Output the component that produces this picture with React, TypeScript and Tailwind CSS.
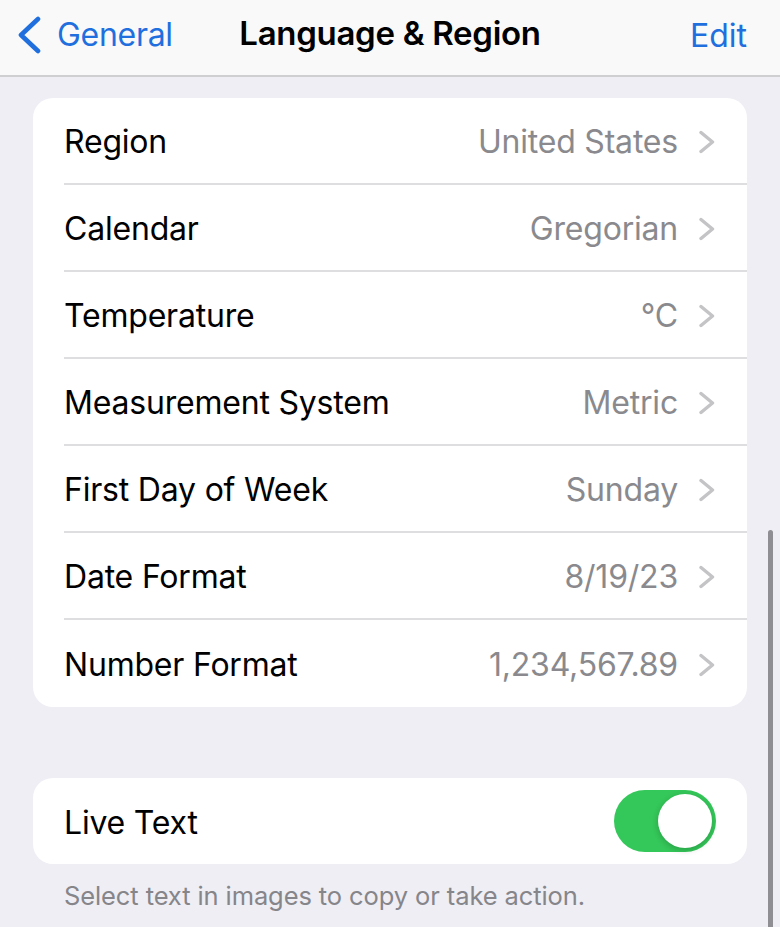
// Rows of the "Language & Region" settings group
const ROWS: { label: string; value: string }[] = [
  { label: "Region", value: "United States" },
  { label: "Calendar", value: "Gregorian" },
  { label: "Temperature", value: "°C" },
  { label: "Measurement System", value: "Metric" },
  { label: "First Day of Week", value: "Sunday" },
  { label: "Date Format", value: "8/19/23" },
  { label: "Number Format", value: "1,234,567.89" },
];

function Chevron() {
  return (
    <svg width="17" height="24" viewBox="0 0 17 24" className="ml-[21px] shrink-0">
      <polyline
        points="2,2.5 13.5,12 2,21.5"
        fill="none"
        stroke="#c4c4c7"
        strokeWidth="3.4"
        strokeLinecap="round"
        strokeLinejoin="round"
      />
    </svg>
  );
}

function Row({ label, value, last }: { label: string; value: string; last: boolean }) {
  return (
    <div className="flex h-[87px] pl-[31px]">
      <div
        className={`flex flex-1 items-center pr-[31px] pt-[3px] ${last ? "" : "border-b-2 border-[#dedee0]"}`}
      >
        <span className="flex-1 text-[32px] tracking-[-0.2px] text-black">{label}</span>
        <span className="text-[32px] tracking-[-0.2px] text-[#8a8a8e]">{value}</span>
        <Chevron />
      </div>
    </div>
  );
}

export default function App() {
  return (
    <div
      className="relative h-[927px] w-[780px] overflow-hidden bg-[#efeef4]"
      style={{ fontFamily: "Inter, 'Noto Sans', sans-serif" }}
    >
      {/* Nav bar */}
      <div className="grid h-[77px] grid-cols-[1fr_auto_1fr] items-start border-b-2 border-[#cfcfd2] bg-[#f9f9f9] px-[17px] pt-[11px]">
        <div className="flex items-center text-[#1f6fdf]">
          <svg width="26" height="38" viewBox="0 0 26 38" className="shrink-0">
            <polyline
              points="21,3 4,19 21,35"
              fill="none"
              stroke="#1f6fdf"
              strokeWidth="4.6"
              strokeLinecap="round"
              strokeLinejoin="round"
            />
          </svg>
          <span className="ml-[14px] text-[32px] tracking-[-0.3px]">General</span>
        </div>
        <span className="-mt-[2px] text-[33px] font-semibold tracking-[-0.3px] text-black">
          Language &amp; Region
        </span>
        <div className="flex justify-end pr-[16px] pt-[1px] text-[32px] text-[#1f6fdf]">
          Edit
        </div>
      </div>

      <div className="px-[33px] pt-[21px]">
        <div className="overflow-hidden rounded-[20px] bg-white">
          {ROWS.map((r, i) => (
            <Row key={r.label} label={r.label} value={r.value} last={i === ROWS.length - 1} />
          ))}
        </div>

        <div className="mt-[71px] flex h-[86px] items-center rounded-[20px] bg-white pl-[31px] pr-[31px]">
          <span className="flex-1 pt-[3px] text-[32px] tracking-[-0.2px] text-black">Live Text</span>
          <div className="flex h-[62px] w-[102px] items-center justify-end rounded-full bg-[#34c759] p-[4px]">
            <div className="h-[54px] w-[54px] rounded-full bg-white shadow-[0_2px_6px_rgba(0,0,0,0.2)]" />
          </div>
        </div>

        <p className="mt-[13px] pl-[31px] text-[25.5px] tracking-[-0.1px] text-[#85858a]">
          Select text in images to copy or take action.
        </p>
      </div>

      {/* Scroll indicator */}
      <div className="absolute right-[7px] top-[530px] h-[420px] w-[5px] rounded-full bg-[#8e8e93]" />
    </div>
  );
}
